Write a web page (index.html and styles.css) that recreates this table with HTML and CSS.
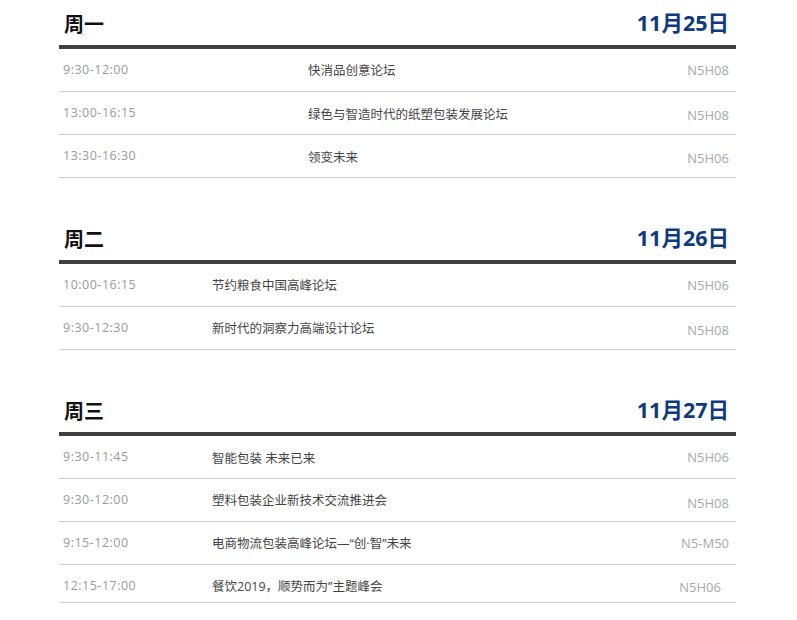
FILE: index.html
```html
<!DOCTYPE html>
<html lang="zh-CN">
<head>
<meta charset="utf-8">
<title>日程</title>
<link rel="stylesheet" href="styles.css">
</head>
<body>
<div class="schedule">
  <section class="day day-wide">
    <div class="day-head"><h2 class="weekday">周一</h2><span class="date">11月25日</span></div>
    <div class="row"><span class="time">9:30-12:00</span><span class="title">快消品创意论坛</span><span class="place">N5H08</span></div>
    <div class="row"><span class="time">13:00-16:15</span><span class="title low">绿色与智造时代的纸塑包装发展论坛</span><span class="place low">N5H08</span></div>
    <div class="row"><span class="time">13:30-16:30</span><span class="title low">领变未来</span><span class="place low">N5H06</span></div>
  </section>
  <section class="day">
    <div class="day-head"><h2 class="weekday">周二</h2><span class="date">11月26日</span></div>
    <div class="row"><span class="time">10:00-16:15</span><span class="title">节约粮食中国高峰论坛</span><span class="place">N5H06</span></div>
    <div class="row"><span class="time">9:30-12:30</span><span class="title">新时代的洞察力高端设计论坛</span><span class="place low">N5H08</span></div>
  </section>
  <section class="day">
    <div class="day-head"><h2 class="weekday">周三</h2><span class="date">11月27日</span></div>
    <div class="row"><span class="time">9:30-11:45</span><span class="title low">智能包装 未来已来</span><span class="place">N5H06</span></div>
    <div class="row"><span class="time">9:30-12:00</span><span class="title">塑料包装企业新技术交流推进会</span><span class="place lower">N5H08</span></div>
    <div class="row"><span class="time">9:15-12:00</span><span class="title">电商物流包装高峰论坛—“创·智”未来</span><span class="place">N5-M50</span></div>
    <div class="row row-last"><span class="time">12:15-17:00</span><span class="title">餐饮2019，顺势而为”主题峰会</span><span class="place shifted">N5H06</span></div>
  </section>
</div>
</body>
</html>
```
FILE: styles.css
```css
html, body {
  margin: 0;
  padding: 0;
  background: #ffffff;
}
body {
  font-family: "Open Sans", "Noto Sans CJK SC", sans-serif;
}
.schedule {
  width: 677px;
  margin-left: 59px;
}
.day + .day {
  margin-top: 37px;
}
.day-head {
  height: 45px;
  display: flex;
  align-items: center;
  justify-content: space-between;
  padding: 0 7px 0 5px;
  border-bottom: 4px solid #404040;
}
.weekday {
  margin: 2px 0 0;
  font-family: "Noto Sans CJK SC", sans-serif;
  font-size: 20px;
  font-weight: 700;
  color: #111;
  line-height: 28px;
}
.date {
  font-family: "Open Sans", "Noto Sans CJK SC", sans-serif;
  font-size: 21.5px;
  font-weight: 700;
  color: #0d3a80;
  line-height: 28px;
  margin-top: 0;
}
.row {
  display: grid;
  grid-template-columns: 149px 1fr auto;
  align-items: start;
  height: 42px;
  box-sizing: content-box;
  padding: 0 7px 0 4px;
  border-bottom: 1px solid #d0d0d0;
}
.day-wide .row {
  grid-template-columns: 245px 1fr auto;
}
.row-last {
  height: 37px;
}
.time {
  font-size: 12.5px;
  letter-spacing: 0.5px;
  line-height: 20px;
  padding-top: 11px;
  color: #9a9a9a;
}
.title {
  font-family: "Open Sans", "Noto Sans CJK SC", sans-serif;
  font-size: 12.5px;
  line-height: 20px;
  padding-top: 12px;
  color: #444;
}
.place {
  font-size: 13px;
  line-height: 20px;
  padding-top: 11px;
  color: #a8a8a8;
}
.low {
  padding-top: 13px;
}
.lower {
  padding-top: 14px;
}
.shifted {
  margin-right: 8px;
  padding-top: 12px;
}
```
